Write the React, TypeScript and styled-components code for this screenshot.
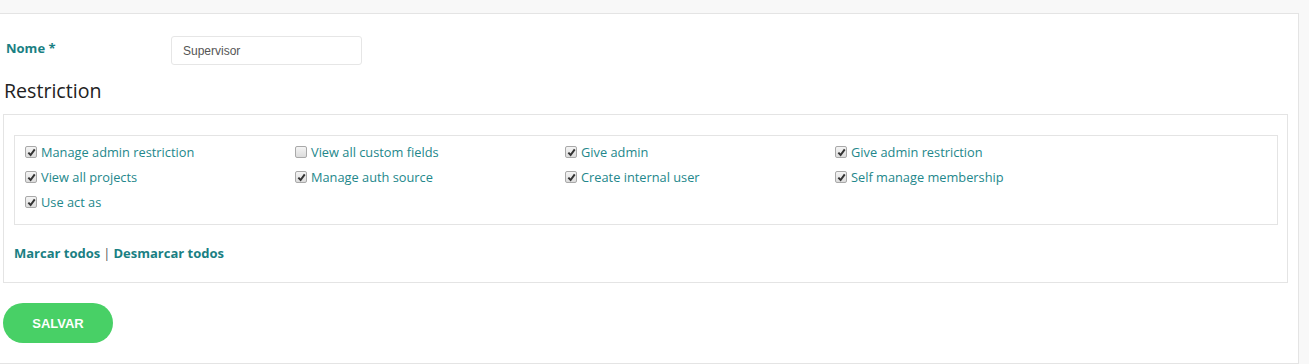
import React from 'react';
import styled, { createGlobalStyle } from 'styled-components';

const GlobalStyle = createGlobalStyle`
  body {
    margin: 0;
    background: #f8f8f8;
    font-family: "Open Sans", "Liberation Sans", sans-serif;
  }
`;

const Page = styled.div`
  padding-top: 13px;
  width: 1299px;
  height: 364px;
  box-sizing: border-box;
`;

const Panel = styled.form`
  background: #fff;
  border: 1px solid #e4e4e4;
  border-left: none;
  height: 351px;
  box-sizing: border-box;
  padding: 21px 10px 0 3px;
`;

const FieldRow = styled.div`
  display: flex;
  align-items: center;
  height: 31px;
`;

const FieldLabel = styled.label`
  width: 168px;
  flex-shrink: 0;
  box-sizing: border-box;
  padding-left: 3px;
  margin-top: -6px;
  font-size: 13px;
  font-weight: 700;
  color: #1a7f83;
`;

const TextInput = styled.input`
  width: 191px;
  height: 29px;
  box-sizing: border-box;
  border: 1px solid #e6e6e6;
  border-radius: 3px;
  padding: 0 11px;
  font-family: "Liberation Sans", Arial, sans-serif;
  font-size: 12px;
  color: #555;
  outline: none;
`;

const Heading = styled.h3`
  margin: 10px 0 0 1px;
  font-size: 19.6px;
  font-weight: 400;
  line-height: 30px;
  color: #222;
`;

const OuterBox = styled.div`
  margin-top: 8px;
  width: 1285px;
  height: 169px;
  box-sizing: border-box;
  border: 1px solid #e4e4e4;
  padding: 20px 9px 0 10px;
`;

const InnerBox = styled.div`
  height: 90px;
  box-sizing: border-box;
  border: 1px solid #e4e4e4;
  padding: 3px 10px 0 10px;
  display: grid;
  grid-template-columns: repeat(4, 270px);
  grid-auto-rows: 25px;
`;

const Option = styled.label`
  display: flex;
  align-items: center;
  gap: 4px;
  font-size: 12.8px;
  color: #23878b;
  white-space: nowrap;
`;

const Box = styled.span`
  width: 12px;
  height: 12px;
  box-sizing: border-box;
  border: 1px solid #a9a9a9;
  border-radius: 2px;
  background: linear-gradient(#f4f4f4, #dcdcdc);
  display: flex;
  align-items: center;
  justify-content: center;
  margin-top: 1px;
`;

const Links = styled.div`
  margin-top: 19px;
  font-size: 13px;
  font-weight: 700;
  color: #1a7f83;
`;

const Sep = styled.span`
  font-weight: 400;
  color: #555;
  margin: 0 3px;
`;

const SaveButton = styled.button`
  margin-top: 20px;
  width: 110px;
  height: 40px;
  border: none;
  border-radius: 20px;
  background: #48d066;
  color: #fff;
  font-family: "Liberation Sans", Arial, sans-serif;
  font-size: 13px;
  font-weight: 700;
  cursor: pointer;
`;

const Check = ({ on }: { on: boolean }) => (
  <Box>
    {on && (
      <svg width="9" height="9" viewBox="0 0 10 10">
        <path d="M1.5 5.2 L4 7.8 L8.6 1.6" fill="none" stroke="#333" strokeWidth="2.2" />
      </svg>
    )}
  </Box>
);

const options: [string, boolean][] = [
  ['Manage admin restriction', true],
  ['View all custom fields', false],
  ['Give admin', true],
  ['Give admin restriction', true],
  ['View all projects', true],
  ['Manage auth source', true],
  ['Create internal user', true],
  ['Self manage membership', true],
  ['Use act as', true],
];

export default function App() {
  return (
    <Page>
      <GlobalStyle />
      <Panel onSubmit={(e) => e.preventDefault()}>
        <FieldRow>
          <FieldLabel>Nome *</FieldLabel>
          <TextInput defaultValue="Supervisor" />
        </FieldRow>
        <Heading>Restriction</Heading>
        <OuterBox>
          <InnerBox>
            {options.map(([label, on]) => (
              <Option key={label}>
                <Check on={on} />
                {label}
              </Option>
            ))}
          </InnerBox>
          <Links>
            Marcar todos<Sep>|</Sep>Desmarcar todos
          </Links>
        </OuterBox>
        <SaveButton>SALVAR</SaveButton>
      </Panel>
    </Page>
  );
}
